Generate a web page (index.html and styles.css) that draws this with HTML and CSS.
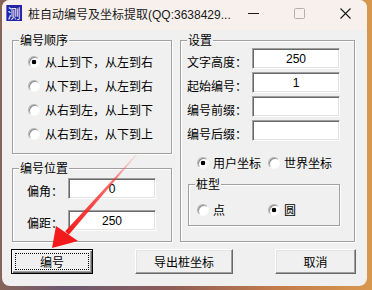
FILE: index.html
```html
<!DOCTYPE html>
<html lang="zh-CN">
<head>
<meta charset="UTF-8">
<title>桩自动编号及坐标提取</title>
<link rel="stylesheet" href="styles.css">
</head>
<body>

<div class="window">
  <div class="titlebar">
    <div class="app-icon">测</div>
    <div class="title">桩自动编号及坐标提取(QQ:3638429...</div>
    <div class="caption">
      <svg width="11" height="11" viewBox="0 0 11 11"><line x1="0" y1="5.5" x2="11" y2="5.5" stroke="#1b1b1b" stroke-width="1"/></svg>
      <svg width="11" height="11" viewBox="0 0 11 11"><rect x="0.5" y="0.5" width="10" height="10" rx="1" fill="none" stroke="#b4b0ae" stroke-width="1"/></svg>
      <svg width="11" height="11" viewBox="0 0 11 11"><path d="M0.5 0.5 L10.5 10.5 M10.5 0.5 L0.5 10.5" stroke="#1b1b1b" stroke-width="1.1"/></svg>
    </div>
  </div>

  <div class="client">
    <div class="columns">
      <div class="col-left">
        <div class="group order">
          <span class="legend">编号顺序</span>
          <label class="radio-row"><span class="radio checked"></span>从上到下，从左到右</label>
          <label class="radio-row"><span class="radio"></span>从下到上，从左到右</label>
          <label class="radio-row"><span class="radio"></span>从右到左，从上到下</label>
          <label class="radio-row"><span class="radio"></span>从右到左，从下到上</label>
        </div>

        <div class="group pos">
          <span class="legend">编号位置</span>
          <div class="field">
            <span class="label">偏角：</span>
            <input type="text" class="box" value="0" readonly>
          </div>
          <div class="field">
            <span class="label">偏距：</span>
            <input type="text" class="box" value="250" readonly>
          </div>
        </div>
      </div>

      <div class="group settings">
        <span class="legend">设置</span>
        <div class="field">
          <span class="label">文字高度：</span>
          <input type="text" class="box" value="250" readonly>
        </div>
        <div class="field">
          <span class="label">起始编号：</span>
          <input type="text" class="box" value="1" readonly>
        </div>
        <div class="field">
          <span class="label">编号前缀：</span>
          <input type="text" class="box" value="" readonly>
        </div>
        <div class="field">
          <span class="label">编号后缀：</span>
          <input type="text" class="box" value="" readonly>
        </div>

        <div class="radio-line coords">
          <label class="radio-item"><span class="radio checked"></span>用户坐标</label>
          <label class="radio-item"><span class="radio"></span>世界坐标</label>
        </div>

        <div class="group pile">
          <span class="legend">桩型</span>
          <div class="radio-line">
            <label class="radio-item"><span class="radio"></span>点</label>
            <label class="radio-item"><span class="radio checked"></span>圆</label>
          </div>
        </div>
      </div>
    </div>

    <div class="buttons">
      <div class="btn default"><span class="focus">编号</span></div>
      <div class="btn wide">导出桩坐标</div>
      <div class="btn">取消</div>
    </div>
  </div>
</div>

<!-- annotation arrow drawn over the screenshot -->
<svg class="arrow" width="372" height="290" viewBox="0 0 372 290">
  <defs>
    <linearGradient id="shaft" x1="137" y1="154" x2="67" y2="233" gradientUnits="userSpaceOnUse">
      <stop offset="0" stop-color="#ff6060" stop-opacity="0.1"/>
      <stop offset="0.35" stop-color="#ff3030" stop-opacity="0.7"/>
      <stop offset="1" stop-color="#f21a1a"/>
    </linearGradient>
  </defs>
  <polygon points="137.4,154.3 136.6,153.7 65.2,231.3 68.8,234.7" fill="url(#shaft)"/>
  <polygon points="52,248 56,226 78,241" fill="#f21a1a"/>
</svg>

</body>
</html>
```

FILE: styles.css
```css
html, body {
    margin: 0;
    padding: 0;
}
body {
    width: 372px;
    height: 290px;
    overflow: hidden;
    background: linear-gradient(90deg, #86645a 0%, #6c5870 18%, #8c5c58 45%, #c47c4a 75%, #d8984e 100%);
    font-family: "Noto Sans CJK SC", "Liberation Sans", sans-serif;
    font-size: 12px;
    color: #000;
}

.window {
    margin-left: 2px;
    width: 365px;
    height: 286px;
    border-radius: 8px;
    overflow: hidden;
    display: flex;
    flex-direction: column;
    background: #f0f0f0;
}

/* title bar */
.titlebar {
    height: 30px;
    flex: none;
    background: #f7f0ec;
    display: flex;
    align-items: center;
}
.app-icon {
    width: 16px;
    height: 16px;
    margin: -4px 6px 0 4px;
    background: #2323a6;
    box-shadow: inset 1px 0 #6a6ad8;
    color: #fff;
    font-size: 13px;
    line-height: 16px;
    text-align: center;
}
.title {
    flex: 1;
    font-family: "Liberation Sans", "Noto Sans CJK SC", sans-serif;
    font-size: 12px;
    line-height: 16px;
    color: #1b1b1b;
    margin-top: -1px;
    white-space: nowrap;
}
.caption {
    display: flex;
    gap: 35px;
    margin: -3px 16px 0 0;
}
.caption svg {
    display: block;
}

/* client area */
.client {
    flex: 1;
    padding: 10px 0 0 10px;
    display: flex;
    flex-direction: column;
}
.columns {
    display: flex;
    gap: 8px;
}
.col-left {
    width: 160px;
    display: flex;
    flex-direction: column;
    gap: 14px;
}

.group {
    position: relative;
    box-sizing: border-box;
    border: 1px solid #a0a0a0;
    box-shadow: inset 1px 1px #fff, 1px 1px #fff;
}
.legend {
    position: absolute;
    top: -8px;
    left: 6px;
    padding: 0 1px;
    background: #f0f0f0;
    line-height: 14px;
    white-space: nowrap;
}

.order {
    height: 114px;
    padding: 9px 0 0 15px;
}
.radio-row {
    display: flex;
    align-items: center;
    height: 24px;
    line-height: 14px;
}
.radio-row .radio {
    margin-right: 5px;
}

.radio {
    flex: none;
    box-sizing: border-box;
    width: 12px;
    height: 12px;
    border-radius: 50%;
    border: 1px solid;
    border-color: #b4b4b4 #fafafa #fafafa #b4b4b4;
    box-shadow: inset 1px 1px #8c8c8c;
    background: #fff;
    margin-right: 4px;
}
.radio.checked {
    background: radial-gradient(circle, #000 0 2px, #fff 2.6px);
}

.field {
    display: flex;
    align-items: flex-start;
}
.label {
    line-height: 14px;
    white-space: nowrap;
}
.box {
    box-sizing: border-box;
    width: 88px;
    height: 21px;
    margin: 0;
    padding: 0;
    border: 1px solid;
    border-color: #a0a0a0 #fff #fff #a0a0a0;
    box-shadow: inset 1px 1px #696969, inset -1px -1px #e3e3e3;
    background: #fff;
    font-family: "Liberation Sans", sans-serif;
    font-size: 12px;
    text-align: center;
    color: #000;
    outline: none;
}

.pos {
    height: 74px;
    padding: 9px 0 0 14px;
}
.pos .label {
    width: 41px;
    margin-top: 6px;
}
.pos .field + .field {
    margin-top: 11px;
}

.settings {
    width: 175px;
    height: 202px;
    padding: 7px 0 0 6px;
}
.settings > .field + .field {
    margin-top: 3px;
}
.settings .label {
    width: 65px;
    margin-top: 7px;
}

.radio-line {
    display: flex;
    align-items: center;
    height: 20px;
    line-height: 14px;
}
.radio-item {
    display: flex;
    align-items: center;
    width: 72px;
}
.coords {
    margin: 12px 0 0 10px;
}
.coords .radio-item:first-child {
    width: 71px;
}

.pile {
    width: 152px;
    height: 42px;
    margin: 11px 0 0 1px;
    padding: 15px 0 0 8px;
}

/* bottom buttons */
.buttons {
    display: flex;
    gap: 42px;
    margin: 7px 0 0 -1px;
}
.btn {
    box-sizing: border-box;
    width: 81px;
    height: 25px;
    display: flex;
    align-items: center;
    justify-content: center;
    background: #f0f0f0;
    border: 1px solid;
    border-color: #fff #696969 #696969 #fff;
    box-shadow: inset -1px -1px #a0a0a0, inset 1px 1px #e3e3e3;
    line-height: 14px;
}
.btn.wide {
    width: 98px;
}
.btn.default {
    width: 82px;
    border-color: #000;
    box-shadow: inset 1px 1px #fff, inset -1px -1px #696969, inset -2px -2px #a0a0a0;
    padding: 3px;
}
.focus {
    flex: 1;
    align-self: stretch;
    display: flex;
    align-items: center;
    justify-content: center;
    border: 1px dotted #000;
}

.arrow {
    position: absolute;
    top: 0;
    left: 0;
    pointer-events: none;
}
```
